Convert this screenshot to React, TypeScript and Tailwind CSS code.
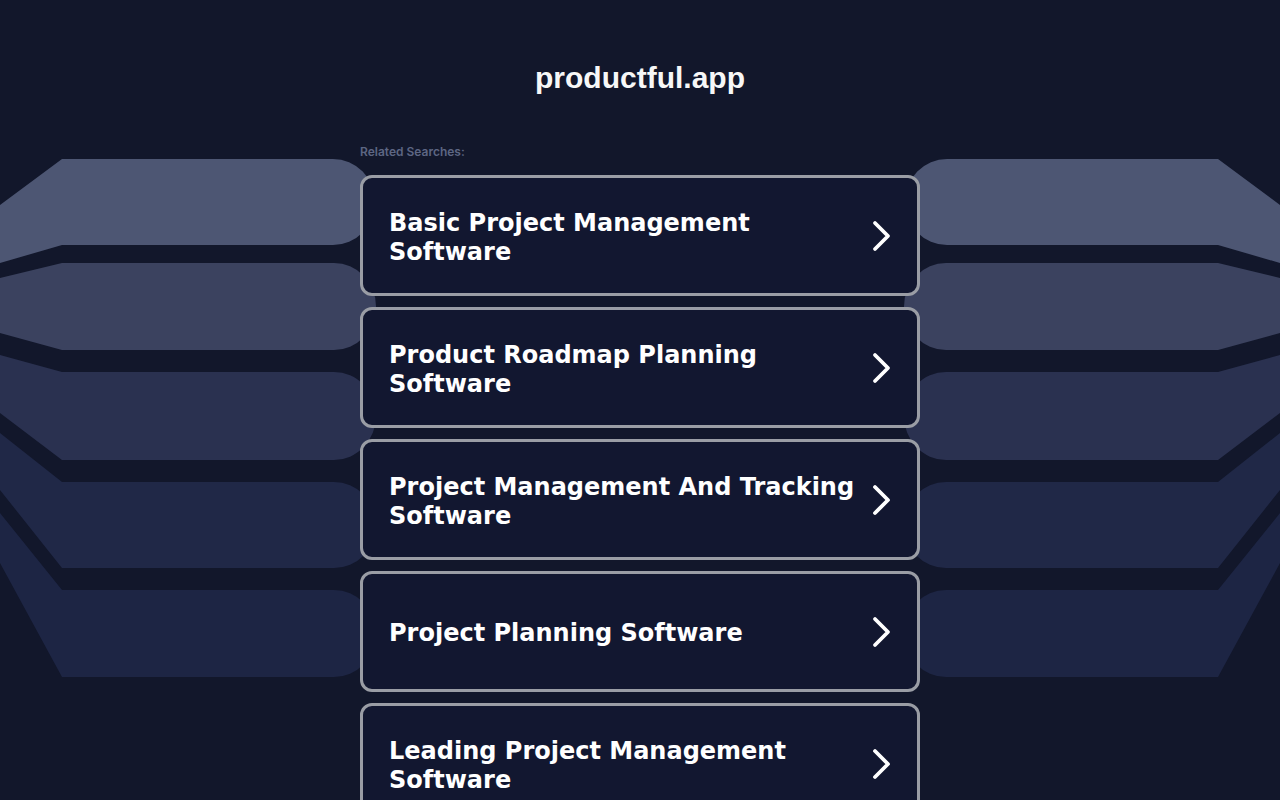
const SEARCHES = [
  'Basic Project Management Software',
  'Product Roadmap Planning Software',
  'Project Management And Tracking Software',
  'Project Planning Software',
  'Leading Project Management Software',
];

// left-hand bands: top/bottom at x>=62, left edge y values at x=0
const BANDS = [
  { t: 159, b: 245, lt: 205, lb: 263, end: 375, fill: '#4d5673' },
  { t: 263, b: 350, lt: 278, lb: 333, end: 376, fill: '#3b425f' },
  { t: 372, b: 460, lt: 355, lb: 413, end: 376, fill: '#2a3150' },
  { t: 482, b: 568, lt: 433, lb: 490, end: 376, fill: '#202847' },
  { t: 590, b: 677, lt: 513, lb: 563, end: 376, fill: '#1d2544' },
];

function bandPath(band: (typeof BANDS)[number]) {
  const half = (band.b - band.t) / 2;
  const r = 42;
  const mid = band.t + half;
  return `M0,${band.lt} L62,${band.t} L${band.end - r},${band.t} A${r},${half} 0 0 1 ${band.end},${mid} A${r},${half} 0 0 1 ${band.end - r},${band.b} L62,${band.b} L0,${band.lb} Z`;
}

function Backdrop() {
  return (
    <svg className="pointer-events-none absolute left-0 top-0" width="1280" height="800" viewBox="0 0 1280 800">
      {BANDS.map((band) => (
        <path key={`l${band.t}`} d={bandPath(band)} fill={band.fill} />
      ))}
      <g transform="translate(1280,0) scale(-1,1)">
        {BANDS.map((band) => (
          <path key={`r${band.t}`} d={bandPath(band)} fill={band.fill} />
        ))}
      </g>
    </svg>
  );
}

function Chevron() {
  return (
    <svg width="22" height="32" viewBox="0 0 22 32" className="shrink-0">
      <polyline points="4,3 17,16 4,29" fill="none" stroke="#ffffff" strokeWidth="3.8" strokeLinecap="round" strokeLinejoin="round" />
    </svg>
  );
}

export default function App() {
  return (
    <div className="relative min-h-screen overflow-hidden bg-[#12172b]">
      <Backdrop />
      <div className="relative mx-auto w-[560px] pb-10">
        <h1
          className="pt-[60px] text-center text-[30px] font-bold leading-[36px] text-[#f7f7f7]"
          style={{ fontFamily: '"Liberation Sans", Arial, sans-serif' }}
        >
          productful.app
        </h1>
        <p
          className="mt-[48px] text-[12px] font-semibold leading-[16px] text-[#5d6683]"
          style={{ fontFamily: 'Inter, "Open Sans", sans-serif' }}
        >
          Related Searches:
        </p>
        <div className="mt-[15px] flex flex-col gap-[11px]">
          {SEARCHES.map((label) => (
            <a
              key={label}
              href="#"
              className="flex h-[121px] items-center justify-between gap-4 rounded-[12px] border-[3px] border-[#9a9da5] bg-[#121730] pl-[26px] pr-[24px]"
            >
              <span
                className="pt-[4px] text-[24px] font-bold leading-[29px] text-white"
                style={{ fontFamily: '"DejaVu Sans", Verdana, sans-serif' }}
              >
                {label}
              </span>
              <Chevron />
            </a>
          ))}
        </div>
      </div>
    </div>
  );
}
